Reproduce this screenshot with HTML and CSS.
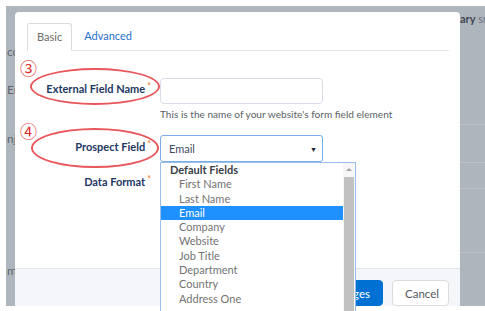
FILE: index.html
```html
<!DOCTYPE html>
<html lang="en">
  <head>
    <meta charset="UTF-8" />
    <meta name="viewport" content="width=device-width, initial-scale=1.0" />
    <title>Form Field</title>
    <link rel="stylesheet" href="styles.css">
  </head>
  <body>
    <div class="screen">
      <div class="backdrop">
        <div class="sideLeft">
          <span class="ghost ghostOne">cc</span>
          <span class="ghost ghostTwo">Er</span>
          <span class="ghost ghostThree">nj</span>
          <span class="ghost ghostFour">m</span>
        </div>

        <div class="modal">
          <div class="modalBody">
            <ul class="tabs">
              <li class="tab tabActive">Basic</li>
              <li class="tab tabLink">Advanced</li>
            </ul>

            <div class="formRow rowExternal">
              <label class="fieldLabel" for="externalName"
                >External Field Name<span class="req">*</span></label
              >
              <input class="textInput" type="text" id="externalName" />
            </div>
            <div class="helpText">
              This is the name of your website's form field element
            </div>

            <div class="formRow rowProspect">
              <label class="fieldLabel"
                >Prospect Field<span class="req">*</span></label
              >
              <div class="selectWrap">
                <div class="selectBox selectFocus">
                  <span>Email</span>
                  <span class="caret">&#9660;</span>
                </div>
                <div class="dropList">
                  <ul class="dropItems">
                    <li class="dropGroup">Default Fields</li>
                    <li>First Name</li>
                    <li>Last Name</li>
                    <li class="dropSelected">Email</li>
                    <li>Company</li>
                    <li>Website</li>
                    <li>Job Title</li>
                    <li>Department</li>
                    <li>Country</li>
                    <li>Address One</li>
                  </ul>
                  <div class="scrollTrack">
                    <span class="scrollUp"></span>
                    <span class="scrollThumb"></span>
                  </div>
                </div>
              </div>
            </div>

            <div class="formRow rowFormat">
              <label class="fieldLabel"
                >Data Format<span class="req">*</span></label
              >
              <div class="selectBox"></div>
            </div>
          </div>

          <div class="modalFooter">
            <button class="btn btnPrimary">Save Changes</button>
            <button class="btn btnNeutral">Cancel</button>
          </div>
        </div>

        <div class="sideRight">
          <div class="ghostHead"><b>ary</b> su</div>
          <div class="ghostRow rowA"></div>
          <div class="ghostRow rowB"></div>
          <div class="ghostRow rowC"></div>
          <div class="ghostRow rowD"></div>
        </div>
      </div>

      <span class="mark markThree">&#9314;</span>
      <span class="ring ringOne"></span>
      <span class="mark markFour">&#9315;</span>
      <span class="ring ringTwo"></span>
    </div>
  </body>
</html>
```

FILE: styles.css
```css
body {
  margin: 0;
  background-color: #fff;
  font-family: "Lato", "Open Sans", sans-serif;
}
.screen {
  position: relative;
  width: 485px;
  height: 311px;
  padding: 6px 0 5px 6px;
  box-sizing: border-box;
  overflow: hidden;
}
.backdrop {
  display: flex;
  height: 300px;
  background-color: #aeb5bd;
}
.sideLeft {
  position: relative;
  width: 9px;
  overflow: hidden;
}
.ghost {
  position: absolute;
  left: 1px;
  font-size: 12px;
  color: #5f6872;
  line-height: 14px;
}
.ghostOne {
  top: 39px;
}
.ghostTwo {
  top: 77px;
}
.ghostThree {
  top: 126px;
}
.ghostFour {
  top: 258px;
}
.modal {
  display: flex;
  flex-direction: column;
  width: 445px;
  margin-top: 6px;
  background: #fff;
  border-radius: 4px 4px 0 0;
}
.modalBody {
  flex: 1;
  padding: 11px 11px 0 12px;
}
.tabs {
  display: flex;
  list-style: none;
  margin: 0;
  padding: 0;
  border-bottom: 1px solid #e6e6e6;
  height: 27px;
}
.tab {
  padding: 0 9px;
  font-size: 11px;
  line-height: 25px;
}
.tabActive {
  border: 1px solid #dddbda;
  border-bottom-color: #fff;
  border-radius: 3px 3px 0 0;
  height: 26px;
  color: #6e6c69;
}
.tabLink {
  margin-left: 3px;
  color: #1f6fd0;
}
.formRow {
  display: flex;
  align-items: center;
  gap: 9px;
}
.fieldLabel {
  width: 124px;
  margin-top: -3px;
  text-align: right;
  font-size: 11px;
  line-height: 14px;
  font-weight: bold;
  color: #1d3763;
}
.req {
  position: relative;
  top: -4px;
  margin-left: 2px;
  color: #f08a3c;
  font-size: 9px;
}
.rowExternal {
  margin-top: 27px;
}
.textInput {
  width: 163px;
  height: 26px;
  box-sizing: border-box;
  border: 1px solid #d8dde6;
  border-radius: 4px;
  padding: 0 8px;
}
.helpText {
  margin: 4px 0 0 133px;
  font-size: 10.1px;
  line-height: 12px;
  color: #5a5f66;
}
.rowProspect {
  margin-top: 15px;
}
.selectWrap {
  position: relative;
}
.selectBox {
  display: flex;
  align-items: center;
  justify-content: space-between;
  width: 163px;
  height: 27px;
  box-sizing: border-box;
  padding: 0 5px 0 8px;
  border: 1px solid #d8dde6;
  border-radius: 3px;
  font-size: 11px;
  color: #3e4a5a;
}
.selectFocus {
  border-color: #79aee8;
}
.caret {
  font-size: 7px;
  color: #1b2433;
}
.dropList {
  position: absolute;
  top: 27px;
  left: 0;
  display: flex;
  width: 196px;
  height: 150px;
  box-sizing: border-box;
  border: 1px solid #9bbfea;
  background: #fff;
}
.dropItems {
  flex: 1;
  list-style: none;
  margin: 0;
  padding: 0;
  font-size: 11px;
  line-height: 14.3px;
  color: #737373;
}
.dropItems li {
  padding-left: 18px;
}
.dropItems .dropGroup {
  padding-left: 9px;
  font-weight: bold;
  color: #3a3f47;
}
.dropItems .dropSelected {
  background-color: #1e90ff;
  color: #fff;
}
.scrollTrack {
  display: flex;
  flex-direction: column;
  align-items: center;
  width: 12px;
  background: #f6f6f6;
}
.scrollUp {
  margin-top: 5px;
  border-left: 3px solid transparent;
  border-right: 3px solid transparent;
  border-bottom: 3px solid #a3a3a3;
}
.scrollThumb {
  margin-top: 6px;
  width: 10px;
  flex: 1;
  background: #c1c1c1;
}
.rowFormat {
  margin-top: 8px;
}
.modalFooter {
  display: flex;
  justify-content: flex-end;
  gap: 9px;
  height: 38px;
  box-sizing: border-box;
  padding: 11px 11px 0;
  border-top: 1px solid #dfe3ea;
  background-color: #f4f6f9;
}
.btn {
  height: 26px;
  padding: 0 12px;
  border-radius: 4px;
  font-family: "Lato", "Open Sans", sans-serif;
  font-size: 11.5px;
}
.btnPrimary {
  border: 1px solid #0070d2;
  background-color: #0070d2;
  color: #fff;
}
.btnNeutral {
  width: 57px;
  border: 1px solid #dddbda;
  background-color: #fff;
  color: #55595e;
}
.sideRight {
  flex: 1;
  overflow: hidden;
}
.ghostHead {
  margin-top: 6px;
  font-size: 11px;
  line-height: 14px;
  color: #6a737d;
  white-space: nowrap;
}
.ghostHead b {
  color: #3f4752;
}
.ghostRow {
  border-bottom: 1px solid #bac1c8;
}
.rowA {
  height: 98px;
}
.rowB {
  height: 37px;
}
.rowC {
  height: 25px;
}
.rowD {
  height: 63px;
}
.mark {
  position: absolute;
  font-family: "Noto Sans CJK JP", "DejaVu Sans", sans-serif;
  font-size: 17px;
  line-height: 17px;
  color: #dd2b2b;
}
.markThree {
  left: 20px;
  top: 59px;
}
.markFour {
  left: 20px;
  top: 122px;
}
.ring {
  position: absolute;
  border: 2px solid #e8575c;
  border-radius: 50%;
}
.ringOne {
  left: 30px;
  top: 68px;
  width: 126px;
  height: 33px;
}
.ringTwo {
  left: 31px;
  top: 128px;
  width: 124px;
  height: 36px;
}
```
